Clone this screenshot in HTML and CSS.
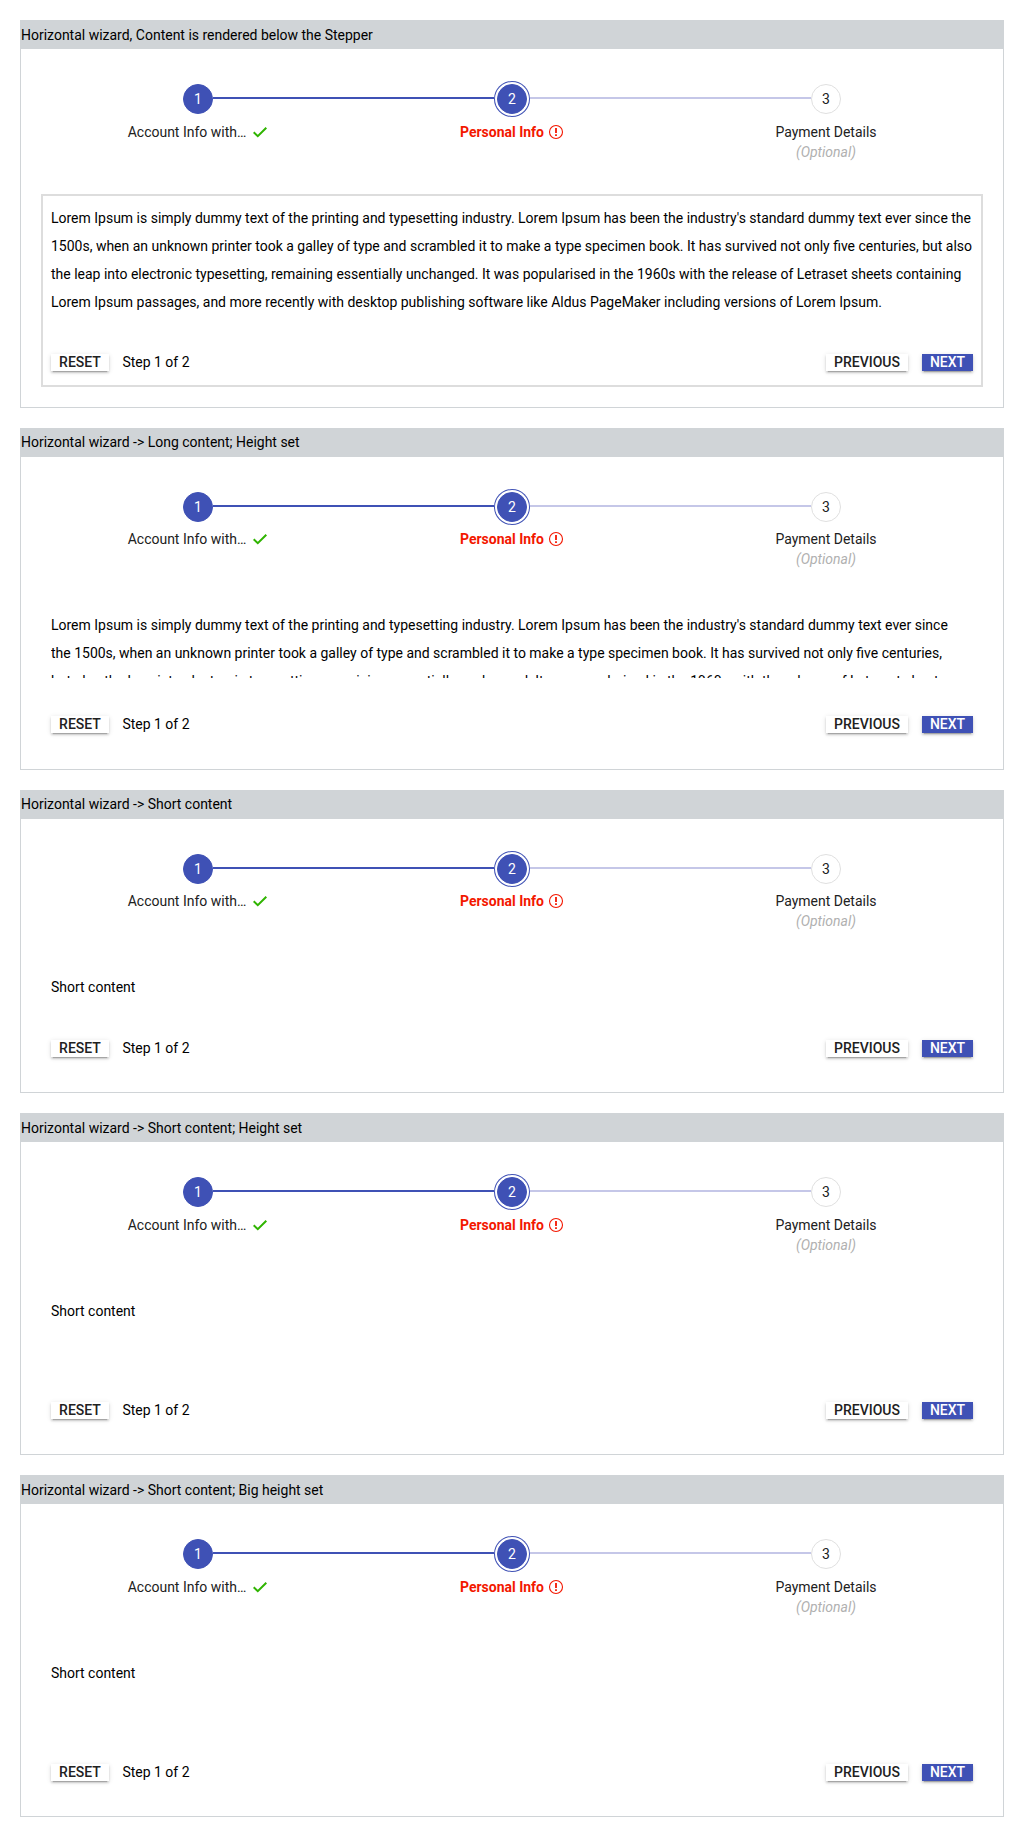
FILE: index.html
```html
<!DOCTYPE html>
<html lang="en">
<head>
<meta charset="utf-8">
<title>Horizontal wizard</title>
<link rel="stylesheet" href="styles.css">
</head>
<body>
<main class="page" id="page"></main>
<template id="card-template">
  <section class="card">
    <h2 class="card-title"></h2>
    <div class="wizard">
      <ol class="stepper">
        <li class="step done">
          <div class="rail"><span class="line blank"></span><span class="circle">1</span><span class="line"></span></div>
          <div class="label"><span>Account Info with…</span>
            <svg class="icon check" viewBox="0 0 16 16"><path d="M1.7 8.2 5.8 12.2 14.3 3.7" fill="none" stroke="#2fb400" stroke-width="2"/></svg>
          </div>
        </li>
        <li class="step active">
          <div class="rail"><span class="line"></span><span class="circle">2</span><span class="line pale"></span></div>
          <div class="label"><span>Personal Info</span>
            <svg class="icon" viewBox="0 0 16 16"><circle cx="8" cy="8" r="6.5" fill="none" stroke="#f31700" stroke-width="1.1"/><path d="M8 4v5M8 10.2v1.8" stroke="#f31700" stroke-width="1.8"/></svg>
          </div>
        </li>
        <li class="step">
          <div class="rail"><span class="line pale"></span><span class="circle">3</span><span class="line blank"></span></div>
          <div class="label"><span>Payment Details</span></div>
          <div class="optional">(Optional)</div>
        </li>
      </ol>
      <div class="panel">
        <div class="content"></div>
        <div class="actions">
          <button class="button">RESET</button>
          <span class="progress">Step 1 of 2</span>
          <button class="button previous">PREVIOUS</button>
          <button class="button primary">NEXT</button>
        </div>
      </div>
    </div>
  </section>
</template>
<script src="script.js"></script>
</body>
</html>
```
FILE: styles.css
```css
* { box-sizing: border-box; }
body {
  margin: 0;
  background: #fff;
  color: #000;
  font: 13.99px/17px Roboto, sans-serif;
}
.page { display: flex; flex-direction: column; gap: 20px; padding: 20px; }
.card {
  display: flex;
  flex-direction: column;
  height: 342px;
  border: 1px solid #d0d4d7;
  border-top: 0;
}
.card.outlined { height: 388px; }
.card.compact { height: 303px; }
.card-title {
  flex: none;
  height: 29px;
  margin: 0;
  background: #d0d4d7;
  font-size: inherit;
  font-weight: 400;
  line-height: 29px;
}
.outlined .card-title, .fixed .card-title { line-height: 31px; }
.wizard { flex: 1; min-height: 0; display: flex; flex-direction: column; padding: 20px; }
.stepper {
  flex: none;
  display: grid;
  grid-template-columns: repeat(3, 1fr);
  height: 125px;
  margin: 0;
  padding: 12px 0 0;
  list-style: none;
}
.step { text-align: center; color: #212121; }
.rail { display: flex; align-items: center; height: 36px; }
.line { flex: 1; height: 2px; margin-top: -2px; background: #3f51b5; }
.line.pale { background: #c5c7e8; }
.line.blank { background: none; }
.circle {
  width: 30px;
  height: 30px;
  border: 1px solid #e0e0e0;
  border-radius: 50%;
  line-height: 28px;
}
.done .circle, .active .circle { border-color: #3f51b5; background: #3f51b5; color: #fff; }
.active .circle { margin: 0 3px; box-shadow: 0 0 0 2px #fff, 0 0 0 3px #3f51b5; }
.label { display: flex; justify-content: center; align-items: center; gap: 6px; height: 20px; margin-top: 5px; }
.active .label { gap: 4px; color: #f31700; font-weight: 700; }
.long .stepper, .compact .stepper { height: 124px; }
.long .label, .compact .label { margin-top: 4px; }
.icon { width: 16px; height: 16px; }
.optional { height: 20px; color: #b0b0b0; font-style: italic; line-height: 20px; }
.panel {
  flex: 1;
  min-height: 0;
  display: flex;
  flex-direction: column;
  justify-content: space-between;
  padding: 10px 10px 15px;
}
.long .panel { padding-bottom: 16px; }
.outlined .panel { padding: 8px 8px 14px; border: 2px solid #ddd; }
.content { line-height: 28px; }
.long .content { height: 67px; padding-right: 15px; overflow: hidden; }
.actions { display: flex; align-items: center; height: 17px; }
.progress { margin: 0 auto 0 13.4px; }
.button {
  width: 58px;
  height: 17px;
  padding: 0;
  border: 0;
  background: #fff;
  color: #212121;
  box-shadow: 0 3px 1px -2px rgba(0, 0, 0, .2), 0 2px 2px rgba(0, 0, 0, .14), 0 1px 5px rgba(0, 0, 0, .12);
  font: 500 14px/17px Roboto, sans-serif;
}
.previous { width: 82px; }
.primary { width: 51px; margin-left: 14px; background: #3f51b5; color: #fff; }
```
FILE: script.js
```js
const lorem = "Lorem Ipsum is simply dummy text of the printing and typesetting industry. Lorem Ipsum has been the industry's standard dummy text ever since the 1500s, when an unknown printer took a galley of type and scrambled it to make a type specimen book. It has survived not only five centuries, but also the leap into electronic typesetting, remaining essentially unchanged. It was popularised in the 1960s with the release of Letraset sheets containing Lorem Ipsum passages, and more recently with desktop publishing software like Aldus PageMaker including versions of Lorem Ipsum.";
const cards = [
  ["outlined", "Horizontal wizard, Content is rendered below the Stepper", lorem],
  ["long", "Horizontal wizard -> Long content; Height set", lorem],
  ["compact", "Horizontal wizard -> Short content", "Short content"],
  ["fixed", "Horizontal wizard -> Short content; Height set", "Short content"],
  ["fixed", "Horizontal wizard -> Short content; Big height set", "Short content"]
];
const template = document.getElementById("card-template");
for (const [kind, title, text] of cards) {
  const node = template.content.cloneNode(true);
  node.querySelector(".card").classList.add(kind);
  node.querySelector(".card-title").textContent = title;
  node.querySelector(".content").textContent = text;
  document.getElementById("page").append(node);
}
```
